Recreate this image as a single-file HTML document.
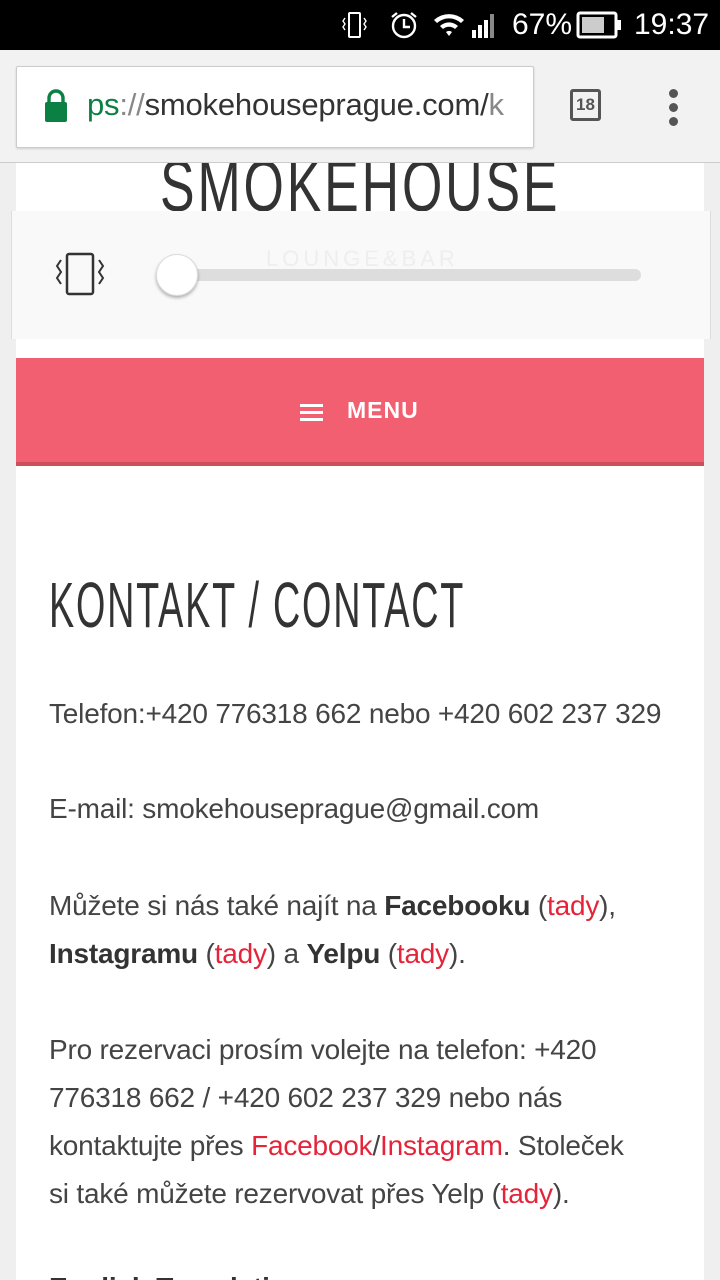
<!DOCTYPE html>
<html style="height:1280px;overflow:hidden"><head><meta charset="utf-8"><style>
body{margin:0;width:720px;height:1280px;overflow:hidden;background:#efefef;font-family:"Liberation Sans",sans-serif;position:relative}
.abs{position:absolute}
.sb{left:0;top:0;width:720px;height:50px;background:#000;color:#fff}
.tb{left:0;top:50px;width:720px;height:112px;background:#f2f2f2;border-bottom:1px solid #ccc}
.url{left:16px;top:66px;width:516px;height:80px;background:#fff;border:1px solid #ccc;border-radius:2px;box-shadow:0 1px 2px rgba(0,0,0,.15)}
.page{left:16px;top:163px;width:688px;height:1117px;background:#fff}
.txt{left:49px;color:#444;font-weight:300;font-size:28px;line-height:48px;letter-spacing:-0.2px;white-space:nowrap}
.r{color:#e5243a}
b{font-weight:bold;color:#333}
.cond{transform-origin:0 0;display:inline-block;white-space:nowrap}
</style></head><body>
<div class="abs sb">
 <svg class="abs" style="left:340px;top:10px" width="30" height="30" viewBox="0 0 30 30" fill="none" stroke="#fff" stroke-width="2"><rect x="9" y="3" width="11" height="24" rx="1"/><path d="M5 8l-2 3 2 3-2 3 2 3M24 8l2 3-2 3 2 3-2 3" stroke-width="1.4"/></svg>
 <svg class="abs" style="left:388px;top:9px" width="32" height="32" viewBox="0 0 32 32" fill="none" stroke="#fff" stroke-width="2.4"><circle cx="16" cy="17" r="11"/><path d="M16 10v8h6M4 8l5-4M28 8l-5-4"/></svg>
 <svg class="abs" style="left:432px;top:10px" width="68" height="30" viewBox="0 0 68 30"><path d="M2 10a22 22 0 0 1 30 0l-3 3a18 18 0 0 0-24 0zM8 16a13 13 0 0 1 18 0l-3 3a9 9 0 0 0-12 0zM14 22a5 5 0 0 1 6 0l-3 4z" fill="#fff"/><rect x="40" y="20" width="4" height="8" fill="#fff"/><rect x="46" y="15" width="4" height="13" fill="#fff"/><rect x="52" y="10" width="4" height="18" fill="#fff"/><rect x="58" y="4" width="4" height="24" fill="#888"/></svg>
 <div class="abs" style="left:512px;top:8px;font-size:30px">67%</div>
 <svg class="abs" style="left:576px;top:11px" width="48" height="28" viewBox="0 0 48 28"><rect x="2" y="2" width="38" height="24" rx="2" fill="none" stroke="#fff" stroke-width="3"/><rect x="6" y="6" width="22" height="16" fill="#ccc"/><rect x="41" y="9" width="4" height="10" fill="#fff"/></svg>
 <div class="abs" style="left:634px;top:8px;font-size:30px">19:37</div>
</div>
<div class="abs tb"></div>
<div class="abs url">
 <svg class="abs" style="left:26px;top:22px" width="26" height="34" viewBox="0 0 26 34"><path d="M6 14V9a7 7 0 0 1 14 0v5" fill="none" stroke="#0b8043" stroke-width="3.4"/><rect x="2" y="13" width="22" height="20" rx="2" fill="#0b8043"/></svg>
 <div class="abs" style="left:70px;top:20px;font-size:31px;color:#333;letter-spacing:-0.2px;white-space:nowrap;width:430px;overflow:hidden"><span style="color:#0b8043">ps</span><span style="color:#888">://</span>smokehouseprague.com/<span style="color:#888">k</span></div>
</div>
<div class="abs" style="left:570px;top:89px;width:31px;height:32px;border:3px solid #555;border-radius:3px;box-sizing:border-box;font-size:17px;font-weight:bold;color:#555;text-align:center;line-height:26px">18</div>
<div class="abs" style="left:669px;top:89px;width:10px"><div style="width:9px;height:9px;border-radius:50%;background:#555;margin-bottom:5px"></div><div style="width:9px;height:9px;border-radius:50%;background:#555;margin-bottom:5px"></div><div style="width:9px;height:9px;border-radius:50%;background:#555"></div></div>
<div class="abs page"></div>
<div class="abs" style="left:160px;top:163px;width:420px;height:50px;overflow:hidden"><span class="cond" style="font-size:72px;color:#333;transform:scaleX(.72);line-height:60px;margin-top:-6px;letter-spacing:4px">SMOKEHOUSE</span></div>
<div class="abs" style="left:11px;top:211px;width:698px;height:128px;background:#f9f9f9;border-left:1px solid #ddd;border-right:1px solid #ddd"></div>
<div class="abs" style="left:266px;top:246px;color:#eee;font-size:22px;letter-spacing:4px">LOUNGE&amp;BAR</div>
<svg class="abs" style="left:52px;top:252px" width="54" height="46" viewBox="0 0 54 46" fill="none" stroke="#333" stroke-width="2.5"><rect x="15" y="2" width="26" height="40" rx="2"/><path d="M9 8l-4 6 4 6-4 6 4 6M47 8l4 6-4 6 4 6-4 6" stroke-width="2"/></svg>
<div class="abs" style="left:160px;top:269px;width:481px;height:12px;border-radius:6px;background:#ddd"></div>
<div class="abs" style="left:156px;top:254px;width:42px;height:42px;border-radius:50%;background:#fff;box-shadow:0 2px 3px rgba(0,0,0,.3);border:1px solid #ddd;box-sizing:border-box"></div>
<div class="abs" style="left:16px;top:358px;width:688px;height:104px;background:#f25f70;border-bottom:4px solid #c9505c"></div>
<svg class="abs" style="left:300px;top:403px" width="24" height="20" viewBox="0 0 24 20" fill="#fff"><rect y="1" width="23" height="3"/><rect y="8" width="23" height="3"/><rect y="15" width="23" height="3"/></svg>
<div class="abs" style="left:347px;top:397px;color:#fff;font-size:23px;font-weight:bold;letter-spacing:1px">MENU</div>
<div class="abs" style="left:49px;top:570px"><span class="cond" style="font-size:64px;color:#333;transform:scaleX(.59);line-height:70px;letter-spacing:3px">KONTAKT / CONTACT</span></div>
<div class="abs txt" style="top:690px">Telefon:+420 776318 662 nebo +420 602 237 329</div>
<div class="abs txt" style="top:785px">E-mail: smokehouseprague@gmail.com</div>
<div class="abs txt" style="top:882px">Můžete si nás také najít na <b>Facebooku</b> (<span class="r">tady</span>),<br><b>Instagramu</b> (<span class="r">tady</span>) a <b>Yelpu</b> (<span class="r">tady</span>).</div>
<div class="abs txt" style="top:1026px">Pro rezervaci prosím volejte na telefon: +420<br>776318 662 / +420 602 237 329 nebo nás<br>kontaktujte přes <span class="r">Facebook</span>/<span class="r">Instagram</span>. Stoleček<br>si také můžete rezervovat přes Yelp (<span class="r">tady</span>).</div>
<div class="abs txt" style="top:1264px"><b>English Translation</b></div>
</body></html>
